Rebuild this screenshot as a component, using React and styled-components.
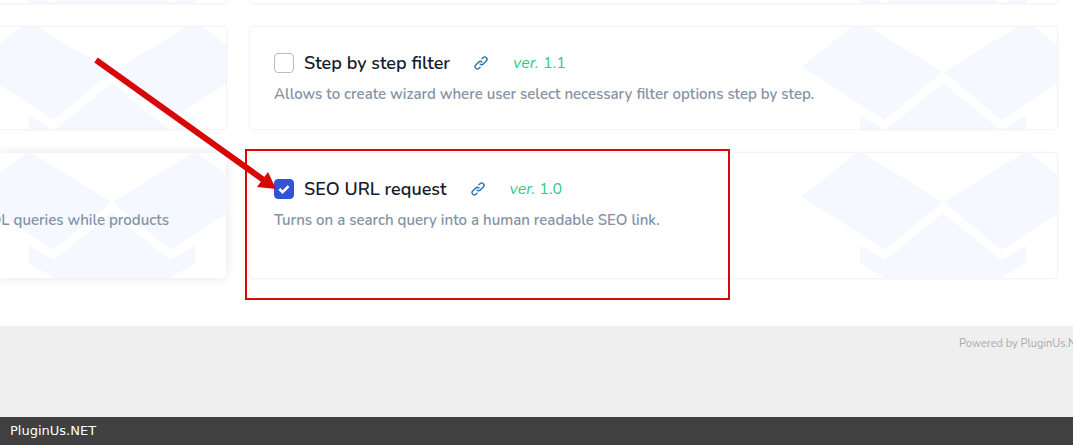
import React from 'react'
import styled, { createGlobalStyle } from 'styled-components'

const GlobalStyle = createGlobalStyle`
  * {
    box-sizing: border-box;
  }
  body {
    margin: 0;
    background: #fff;
    font-family: Nunito, 'Open Sans', sans-serif;
    overflow: hidden;
  }
`

const Page = styled.div`
  position: relative;
  overflow: hidden;
`

/* the panel is scrolled, so the first row is mostly above the window */
const Grid = styled.main`
  display: grid;
  grid-template-columns: 226px 1fr;
  gap: 24px;
  margin-top: -99px;
  padding: 0 16px 48px 0;
`

const Card = styled.section`
  position: relative;
  overflow: hidden;
  min-height: 102px;
  padding: 24px 24px 23px;
  border-radius: ${props => (props.$cut ? '0 3px 3px 0' : '3px')};
  background: #fff;
  box-shadow: ${props => (props.$raised ? '0 0 12px rgba(0, 0, 0, .1)' : '0 0 3px rgba(0, 0, 0, .12)')};
`

const BoxShape = styled.svg`
  position: absolute;
  top: 15%;
  right: -27px;
  width: 282px;
  height: 212px;
  margin-top: -70px;
  fill: #f5f8ff;
`

const Head = styled.div`
  position: relative;
  display: flex;
  align-items: center;
  height: 24px;
  margin-bottom: 8px;
`

const Check = styled.input`
  appearance: none;
  flex: none;
  width: 20px;
  height: 20px;
  margin: 0 10px 0 0;
  border: 1px solid #b9bbbe;
  border-radius: 4px;
  background: #fff;
  &:checked {
    border-color: #2f55d4;
    background: #2f55d4 url("data:image/svg+xml,%3Csvg xmlns='http://www.w3.org/2000/svg' viewBox='0 0 20 20'%3E%3Cpath d='M5.4 10l3.2 3.2 6-6' fill='none' stroke='white' stroke-width='2.6'/%3E%3C/svg%3E") center / 20px 20px no-repeat;
  }
`

const Title = styled.label`
  color: #161c2d;
  font-size: 18px;
  font-weight: 600;
  line-height: 24px;
`

const DocLink = styled.a`
  display: flex;
  margin: 0 24px 0 23px;
  color: #2271b1;
`

const Version = styled.span`
  color: #2eca8b;
  font-size: 16px;
  line-height: 24px;
`

const Text = styled.p`
  position: relative;
  margin: 0;
  color: #8492a6;
  font-size: 15px;
  font-weight: 600;
  line-height: 23px;
`

const CutText = styled(Text)`
  display: flex;
  justify-content: flex-end;
  min-height: 46px;
  margin-top: 32px;
  padding-right: 33px;
  white-space: nowrap;
`

const Footer = styled.footer`
  display: flex;
  justify-content: flex-end;
  height: 91px;
  padding-top: 10px;
  background: #efefef;
`

const Powered = styled.a`
  flex: 0 0 114px;
  min-width: 0;
  color: #aaa;
  font-size: 11px;
  line-height: 16px;
  text-decoration: none;
  white-space: nowrap;
`

const Caption = styled.div`
  padding: 0 10px;
  background: #404040;
  color: #fff;
  font-family: 'DejaVu Sans', sans-serif;
  font-size: 13px;
  line-height: 28px;
`

const Frame = styled.div`
  position: absolute;
  top: 149px;
  left: 245px;
  width: 485px;
  height: 151px;
  border: 2px solid #d60808;
  pointer-events: none;
`

const Arrow = styled.svg`
  position: absolute;
  top: 0;
  left: 0;
  width: 300px;
  height: 200px;
  pointer-events: none;
`

function Pattern () {
  return (
    <BoxShape viewBox='0 0 282 212' aria-hidden='true'>
      <path d='M0 94.5L57 49l83.5 51-58 48z' />
      <path d='M141.5 100L225 49l57 45.5-82.5 53.5z' />
      <path d='M141 111l58.5 47.5L224 143v18l-83 49-83-49v-18l24.5 15.5z' />
    </BoxShape>
  )
}

function LinkIcon () {
  return (
    <svg width='16' height='16' viewBox='0 0 24 24' fill='currentColor'>
      <path d='M10,17.55,8.23,19.27a2.47,2.47,0,0,1-3.5-3.5l4.54-4.55a2.46,2.46,0,0,1,3.39-.09l.12.1a1,1,0,0,0,1.4-1.43A2.75,2.75,0,0,0,14,9.59a4.46,4.46,0,0,0-6.09.22L3.31,14.36a4.48,4.48,0,0,0,6.33,6.33L11.37,19A1,1,0,0,0,10,17.55Z' />
      <path d='M20.69,3.31a4.49,4.49,0,0,0-6.33,0L12.63,5A1,1,0,0,0,14,6.45l1.73-1.72a2.47,2.47,0,0,1,3.5,3.5l-4.54,4.55a2.46,2.46,0,0,1-3.39.09l-.12-.1a1,1,0,0,0-1.4,1.43,2.75,2.75,0,0,0,.23.21,4.47,4.47,0,0,0,6.09-.22l4.55-4.55A4.49,4.49,0,0,0,20.69,3.31Z' />
    </svg>
  )
}

function Extension ({ id, title, version, text, checked }) {
  return (
    <Card>
      <Pattern />
      <Head>
        <Check type='checkbox' id={id} defaultChecked={checked} />
        <Title htmlFor={id}>{title}</Title>
        <DocLink href='#' aria-label={`${title} documentation`}><LinkIcon /></DocLink>
        <Version><i>ver.</i> {version}</Version>
      </Head>
      <Text>{text}</Text>
    </Card>
  )
}

export default function App () {
  return (
    <>
      <GlobalStyle />
      <Page>
        <Grid>
          <Card $cut><Pattern /></Card>
          <Card><Pattern /></Card>
          <Card $cut><Pattern /></Card>
          <Extension
            id='step'
            title='Step by step filter'
            version='1.1'
            text='Allows to create wizard where user select necessary filter options step by step.'
          />
          <Card $cut $raised>
            <Pattern />
            <CutText>SQL queries while products</CutText>
          </Card>
          <Extension
            id='seo'
            title='SEO URL request'
            version='1.0'
            text='Turns on a search query into a human readable SEO link.'
            checked
          />
        </Grid>
        <Footer>
          <Powered href='#'>Powered by PluginUs.NET</Powered>
        </Footer>
        <Caption>PluginUs.NET</Caption>
        <Frame />
        <Arrow viewBox='0 0 300 200' aria-hidden='true'>
          <path d='M96 60L265 181' stroke='#d60808' strokeWidth='6' />
          <path d='M276 189l-8-17-11 15z' fill='#d60808' />
        </Arrow>
      </Page>
    </>
  )
}
